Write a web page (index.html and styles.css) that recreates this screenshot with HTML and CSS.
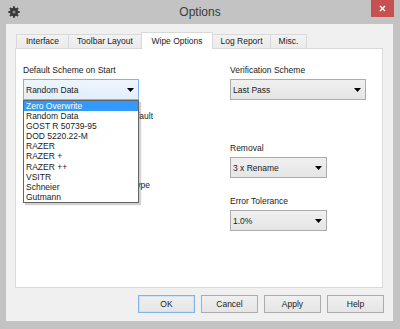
FILE: index.html
```html
<!DOCTYPE html>
<html>
<head>
<meta charset="utf-8">
<link rel="stylesheet" href="styles.css">
</head>
<body>
<div class="window">
  <div class="titlebar">
    <div class="tb-left">
      <svg class="appicon" width="12" height="12" viewBox="0 0 12 12">
        <g fill="#3a3a3a">
          <circle cx="6" cy="6" r="4.2"/>
          <rect x="5" y="0.3" width="2" height="2.4"/>
          <rect x="5" y="9.3" width="2" height="2.4"/>
          <rect x="0.3" y="5" width="2.4" height="2"/>
          <rect x="9.3" y="5" width="2.4" height="2"/>
          <rect x="5" y="0.3" width="2" height="2.4" transform="rotate(45 6 6)"/>
          <rect x="5" y="9.3" width="2" height="2.4" transform="rotate(45 6 6)"/>
          <rect x="0.3" y="5" width="2.4" height="2" transform="rotate(45 6 6)"/>
          <rect x="9.3" y="5" width="2.4" height="2" transform="rotate(45 6 6)"/>
        </g>
        <circle cx="6" cy="6" r="1.6" fill="#8a8a8a"/>
      </svg>
    </div>
    <div class="title">Options</div>
    <div class="tb-right">
      <div class="close">
        <svg width="7" height="7" viewBox="0 0 7 7"><path d="M1 1L6 6M6 1L1 6" stroke="#fff" stroke-width="1.4"/></svg>
      </div>
    </div>
  </div>
  <div class="client">
    <div class="tabs">
      <div class="tab t-interface">Interface</div>
      <div class="tab t-toolbar">Toolbar Layout</div>
      <div class="tab t-wipe selected">Wipe Options</div>
      <div class="tab t-log">Log Report</div>
      <div class="tab t-misc">Misc.</div>
    </div>
    <div class="panel">
      <div class="col col-left">
        <div class="label">Default Scheme on Start</div>
        <div class="combo-wrap">
          <div class="combo focused w116">
            <span>Random Data</span>
            <svg class="arrow" width="7" height="4" viewBox="0 0 7 4"><path d="M0 0H7L3.5 4Z" fill="#000"/></svg>
          </div>
          <ul class="droplist">
            <li class="sel">Zero Overwrite</li>
            <li>Random Data</li>
            <li>GOST R 50739-95</li>
            <li>DOD 5220.22-M</li>
            <li>RAZER</li>
            <li>RAZER +</li>
            <li>RAZER ++</li>
            <li>VSITR</li>
            <li>Schneier</li>
            <li>Gutmann</li>
          </ul>
        </div>
        <div class="hidden-row r1"><span>Use last scheme as default</span></div>
        <div class="hidden-row r2"><span>Skip files by type</span></div>
      </div>
      <div class="col col-right">
        <div class="label">Verification Scheme</div>
        <div class="combo w136">
          <span>Last Pass</span>
          <svg class="arrow" width="7" height="4" viewBox="0 0 7 4"><path d="M0 0H7L3.5 4Z" fill="#000"/></svg>
        </div>
        <div class="label l-removal">Removal</div>
        <div class="combo w97">
          <span>3 x Rename</span>
          <svg class="arrow" width="7" height="4" viewBox="0 0 7 4"><path d="M0 0H7L3.5 4Z" fill="#000"/></svg>
        </div>
        <div class="label l-error">Error Tolerance</div>
        <div class="combo w97">
          <span>1.0%</span>
          <svg class="arrow" width="7" height="4" viewBox="0 0 7 4"><path d="M0 0H7L3.5 4Z" fill="#000"/></svg>
        </div>
      </div>
    </div>
    <div class="buttons">
      <div class="btn default">OK</div>
      <div class="btn">Cancel</div>
      <div class="btn">Apply</div>
      <div class="btn">Help</div>
    </div>
  </div>
</div>
</body>
</html>
```

FILE: styles.css
```css
* { box-sizing: border-box; }
html, body { margin: 0; padding: 0; }
body {
  width: 400px;
  height: 329px;
  overflow: hidden;
  font-family: "Liberation Sans", Arial, sans-serif;
  font-size: 8.5px;
  color: #1a1a1a;
  background: #c3c3c3;
}
.window {
  width: 400px;
  height: 329px;
  background: #c3c3c3;
  display: flex;
  flex-direction: column;
}
.titlebar {
  height: 24px;
  display: grid;
  grid-template-columns: 1fr auto 1fr;
  align-items: start;
}
.tb-left {
  padding: 6px 0 0 8px;
}
.appicon { display: block; }
.title {
  font-size: 12px;
  line-height: 14px;
  padding-top: 5px;
  color: #3a3a3a;
}
.tb-right {
  display: flex;
  justify-content: flex-end;
  padding-right: 6px;
}
.close {
  width: 23px;
  height: 17px;
  background: #c75050;
  display: flex;
  align-items: center;
  justify-content: center;
}
.close svg { display: block; }
.client {
  flex: 1;
  margin: 0 7px 8px 6px;
  background: #f0f0f0;
  padding: 8px 10px 0 9px;
  display: flex;
  flex-direction: column;
}
.tabs {
  height: 16px;
  display: flex;
  align-items: flex-end;
  padding-left: 1px;
}
.tab {
  height: 14px;
  border: 1px solid #d9d9d9;
  border-bottom: none;
  background: linear-gradient(#f2f2f2, #ebebeb);
  text-align: center;
  line-height: 12px;
  margin-left: -1px;
  white-space: nowrap;
}
.tab:first-child { margin-left: 0; }
.tab.selected {
  height: 17px;
  margin-bottom: -1px;
  background: #fff;
  padding-top: 2px;
  position: relative;
  z-index: 1;
}
.t-interface { width: 53px; }
.t-toolbar { width: 74px; }
.t-wipe { width: 72px; }
.t-log { width: 59px; }
.t-misc { width: 37px; }
.panel {
  height: 240px;
  border: 1px solid #d9d9d9;
  background: #fff;
  padding: 15px 0 0 7px;
  display: grid;
  grid-template-columns: 207px 1fr;
}
.col {
  display: flex;
  flex-direction: column;
  align-items: flex-start;
}
.label {
  line-height: 12px;
  white-space: nowrap;
  margin-bottom: 3px;
}
.l-removal { margin-top: 42px; }
.l-error { margin-top: 17px; }
.combo {
  height: 21px;
  border: 1px solid #acacac;
  background: linear-gradient(#f0f0f0, #e5e5e5);
  display: flex;
  align-items: center;
  justify-content: space-between;
  padding: 0 4px 0 2px;
  white-space: nowrap;
}
.combo.focused {
  border-color: #7eb4ea;
  background: linear-gradient(#eef5fd, #e2eefb);
}
.arrow { display: block; }
.w116 { width: 116px; }
.w136 { width: 136px; }
.w97 { width: 97px; }
.combo-wrap {
  position: relative;
}
.droplist {
  position: absolute;
  top: 21px;
  left: 0;
  width: 116px;
  margin: 0;
  padding: 0;
  list-style: none;
  background: #fff;
  border: 1px solid #646464;
  box-shadow: 2px 2px 1px rgba(0, 0, 0, 0.18);
  z-index: 5;
}
.droplist li {
  height: 10.1px;
  line-height: 10.1px;
  padding-left: 2px;
  white-space: nowrap;
}
.droplist li.sel {
  background: #3399ff;
  color: #fff;
}
/* rows partly hidden under the open list: only their visible ends are drawn */
.hidden-row {
  margin-left: 116px;
  display: flex;
  justify-content: flex-end;
  overflow: hidden;
  line-height: 12px;
  white-space: nowrap;
}
.hidden-row span { flex: none; }
.r1 { width: 14px; margin-top: 10px; }
.r2 { width: 11px; margin-top: 57px; }
.buttons {
  margin-top: 7px;
  margin-right: -1px;
  display: flex;
  justify-content: flex-end;
  gap: 6px;
}
.btn {
  width: 57px;
  height: 18px;
  border: 1px solid #acacac;
  background: linear-gradient(#f0f0f0, #e5e5e5);
  text-align: center;
  line-height: 16px;
}
.btn.default {
  border-color: #7eb4ea;
  box-shadow: inset 0 0 0 1px #cfe3f8;
}
```
